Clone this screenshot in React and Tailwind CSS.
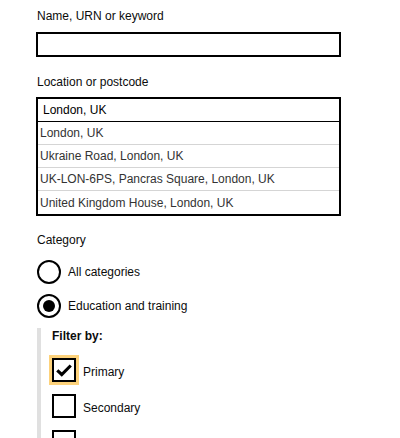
import React from "react";

const SUGGESTIONS = [
  "London, UK",
  "Ukraine Road, London, UK",
  "UK-LON-6PS, Pancras Square, London, UK",
  "United Kingdom House, London, UK",
];

function Radio({ label, checked }) {
  return (
    <label className="flex items-center gap-[7px]">
      <span className="flex h-[24px] w-[24px] items-center justify-center rounded-full border-2 border-black">
        {checked && <span className="h-[12px] w-[12px] rounded-full bg-black" />}
      </span>
      <span className="leading-[15px]">{label}</span>
    </label>
  );
}

function Checkbox({ label, checked, focused }) {
  return (
    <label className="flex items-center gap-[7px]">
      <span
        className={
          focused
            ? "flex h-[24px] w-[24px] items-center justify-center border-2 border-black outline-[3px] outline-solid outline-[#fdd27b]"
            : "flex h-[24px] w-[24px] items-center justify-center border-2 border-black"
        }
      >
        {checked && (
          <svg width="18" height="18" viewBox="0 0 24 24">
            <path d="M3 12.5 L9 18 L21 6" fill="none" stroke="black" strokeWidth="4.2" />
          </svg>
        )}
      </span>
      <span className="mt-[4px] leading-[15px]">{label}</span>
    </label>
  );
}

export default function App() {
  return (
    <div className="h-[438px] w-[400px] overflow-hidden bg-white pl-[36px] pt-[9px] font-['Liberation_Sans',Arial,sans-serif] text-[12px] text-[#0b0c0c]">
      {/* name field */}
      <div className="ml-px leading-[15px]">Name, URN or keyword</div>
      <div className="mt-[8px] h-[25px] w-[305px] border-2 border-black" />

      {/* location field + suggestions */}
      <div className="ml-px mt-[18px] leading-[15px]">Location or postcode</div>
      <div className="mt-[7px] w-[305px] border-2 border-black">
        <div className="flex h-[23px] items-center border-b border-black pl-[5px] text-black">London, UK</div>
        {SUGGESTIONS.map((s, i) => (
          <div
            key={s}
            className={
              i < SUGGESTIONS.length - 1
                ? "flex h-[23px] items-center border-b border-[#d5d5d5] pl-[2px] text-[#333]"
                : "flex h-[23px] items-center pl-[2px] text-[#333]"
            }
          >
            {s}
          </div>
        ))}
      </div>

      {/* category */}
      <div className="ml-px mt-[17px] leading-[15px]">Category</div>
      <div className="ml-px mt-[12px] flex flex-col gap-[10px]">
        <Radio label="All categories" />
        <Radio label="Education and training" checked />
      </div>

      <div className="ml-px mt-[10px] border-l-[4px] border-[#e0e0e0] pl-[11px] pt-px">
        <div className="font-bold leading-[15px]">Filter by:</div>
        <div className="mt-[14px] flex flex-col gap-[12px]">
          <Checkbox label="Primary" checked focused />
          <Checkbox label="Secondary" />
          <Checkbox label="Multi-academy trust" />
        </div>
      </div>
    </div>
  );
}
